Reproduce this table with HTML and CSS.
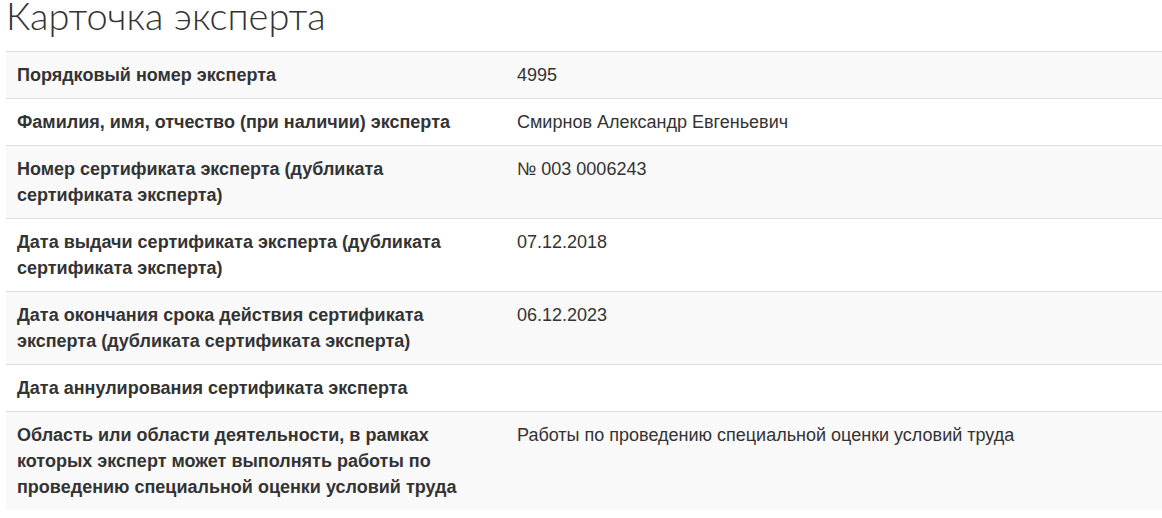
FILE: index.html
```html
<!DOCTYPE html>
<html lang="ru">
<head>
<meta charset="utf-8">
<title>Карточка эксперта</title>
<link rel="stylesheet" href="styles.css">
</head>
<body>
<div class="page">
  <h1 class="title">Карточка эксперта</h1>
  <table class="card">
    <tbody>
      <tr><th>Порядковый номер эксперта</th><td>4995</td></tr>
      <tr><th>Фамилия, имя, отчество (при наличии) эксперта</th><td>Смирнов Александр Евгеньевич</td></tr>
      <tr><th>Номер сертификата эксперта (дубликата сертификата эксперта)</th><td>№ 003 0006243</td></tr>
      <tr><th>Дата выдачи сертификата эксперта (дубликата сертификата эксперта)</th><td>07.12.2018</td></tr>
      <tr><th>Дата окончания срока действия сертификата эксперта (дубликата сертификата эксперта)</th><td>06.12.2023</td></tr>
      <tr><th>Дата аннулирования сертификата эксперта</th><td></td></tr>
      <tr><th>Область или области деятельности, в рамках которых эксперт может выполнять работы по проведению специальной оценки условий труда</th><td>Работы по проведению специальной оценки условий труда</td></tr>
    </tbody>
  </table>
</div>
</body>
</html>
```
FILE: styles.css
```css
html, body {
  margin: 0;
  padding: 0;
  background: #fff;
}
.page {
  padding-left: 6px;
  font-family: "Liberation Sans", Arial, sans-serif;
  color: #333;
}
.title {
  margin: 0;
  padding: 0;
  font-family: Lato, "Open Sans", sans-serif;
  font-weight: 300;
  font-size: 38px;
  line-height: 30px;
  height: 51px;
  color: #333;
}
.card {
  width: 100%;
  border-collapse: collapse;
  border-spacing: 0;
  font-size: 18px;
  line-height: 26px;
}
.card th, .card td {
  border-top: 1px solid #ddd;
  padding: 10px 11px;
  text-align: left;
  vertical-align: top;
}
.card th {
  width: 478px;
  font-weight: bold;
}
.card td {
  font-weight: normal;
}
.card tr:nth-child(odd) {
  background: #f9f9f9;
}
```
